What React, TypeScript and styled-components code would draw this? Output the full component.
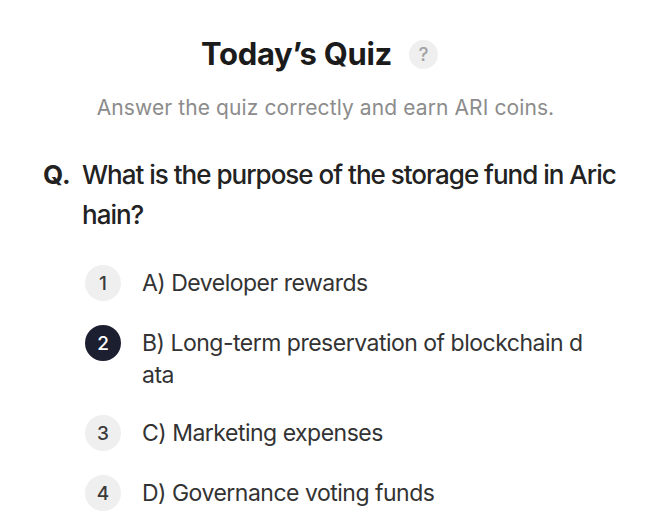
import * as React from 'react'
import styled, { createGlobalStyle } from 'styled-components'

const GlobalStyle = createGlobalStyle`
  html, body {
    margin: 0;
    padding: 0;
    background: #ffffff;
  }
  body {
    font-family: Inter, "Noto Sans", "Liberation Sans", sans-serif;
    -webkit-font-smoothing: antialiased;
  }
`

const Page = styled.div`
  width: 651px;
  min-height: 532px;
  padding-top: 36px;
  box-sizing: border-box;
`

const Header = styled.header`
  display: flex;
  flex-direction: column;
  align-items: center;
`

const TitleRow = styled.div`
  display: flex;
  align-items: center;
  gap: 17px;
  margin-left: -12px;
`

const Title = styled.h1`
  margin: 0;
  font-size: 31px;
  line-height: 36px;
  font-weight: 700;
  color: #1b1b1b;
  letter-spacing: -0.3px;
`

const HelpBadge = styled.span`
  width: 29px;
  height: 29px;
  border-radius: 50%;
  background: #efefef;
  color: #a3a3a3;
  font-size: 19px;
  font-weight: 500;
  display: flex;
  align-items: center;
  justify-content: center;
`

const Subtitle = styled.p`
  margin: 23px 0 0;
  font-size: 21px;
  line-height: 26px;
  color: #8c8c8c;
  letter-spacing: 0.1px;
`

const Question = styled.div`
  display: flex;
  margin: 34px 0 0 43px;
  font-size: 26px;
  line-height: 40px;
  color: #222222;
`

const QLabel = styled.span`
  flex: 0 0 39px;
  font-weight: 700;
`

const QText = styled.span`
  width: 540px;
  font-weight: 500;
  letter-spacing: -1px;
  word-break: break-all;
`

const Options = styled.ol`
  list-style: none;
  margin: 30px 0 0 85px;
  padding: 0;
  display: flex;
  flex-direction: column;
  gap: 24px;
`

const Option = styled.li`
  display: flex;
  align-items: flex-start;
  gap: 21px;
`

const Num = styled.span<{ $active?: boolean }>`
  flex: 0 0 36px;
  height: 36px;
  border-radius: 50%;
  display: flex;
  align-items: center;
  justify-content: center;
  font-size: 19px;
  font-weight: 500;
  background: ${p => (p.$active ? '#1c1f30' : '#efefef')};
  color: ${p => (p.$active ? '#ffffff' : '#3a3a3a')};
`

const OptionText = styled.span`
  width: 452px;
  padding-top: 2px;
  font-size: 23px;
  line-height: 32px;
  color: #333333;
  letter-spacing: -0.5px;
  word-break: break-all;
`

const answers = [
  'A) Developer rewards',
  'B) Long-term preservation of blockchain data',
  'C) Marketing expenses',
  'D) Governance voting funds',
]

export default function App() {
  const selected = 1
  return (
    <Page>
      <GlobalStyle />
      <Header>
        <TitleRow>
          <Title>Today’s Quiz</Title>
          <HelpBadge>?</HelpBadge>
        </TitleRow>
        <Subtitle>Answer the quiz correctly and earn ARI coins.</Subtitle>
      </Header>
      <Question>
        <QLabel>Q.</QLabel>
        <QText>What is the purpose of the storage fund in Arichain?</QText>
      </Question>
      <Options>
        {answers.map((a, i) => (
          <Option key={a}>
            <Num $active={i === selected}>{i + 1}</Num>
            <OptionText>{a}</OptionText>
          </Option>
        ))}
      </Options>
    </Page>
  )
}
